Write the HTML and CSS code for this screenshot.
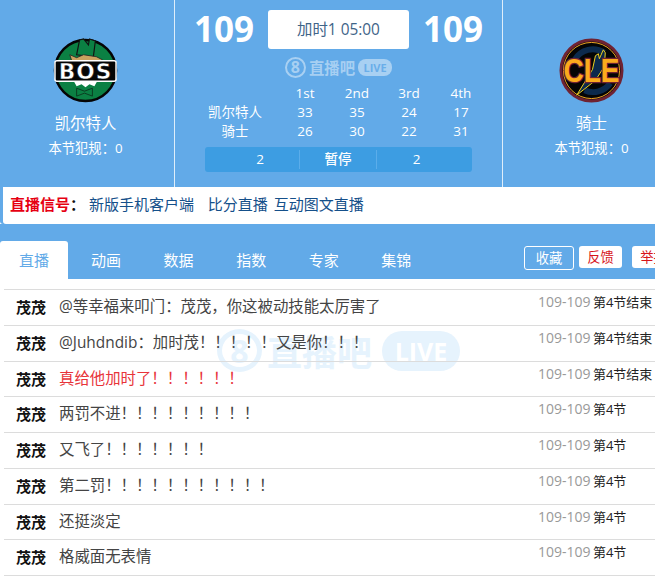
FILE: index.html
```html
<!DOCTYPE html>
<html lang="zh-CN">
<head>
  <title>凯尔特人 vs 骑士 直播</title>
  <meta charset="UTF-8">
  <link rel="stylesheet" href="styles.css">
</head>
<body>
  <div class="page">
    <header class="score-head">
      <div class="team">
        <svg class="logo" viewBox="0 0 66 66">
          <circle cx="33" cy="33" r="31" fill="#0b8043" stroke="#050505" stroke-width="2.5"/>
          <path d="M27 2l-3 15 17 2 2-16-6-2-1 6-5-6z" fill="#0b8043" stroke="#111" stroke-width="1.2"/>
          <path d="M17 17l7 3 7-3 13 2 6 3-4 4H20z" fill="#c9a25f" stroke="#222" stroke-width=".8"/>
          <path d="M20 42l4 7 5-2 4 3 4-3 5 2 4-7z" fill="#fff"/>
          <path d="M24 51l8 3 8-3v8l-8-3-8 3z" fill="#0b8043" stroke="#0a3d22" stroke-width="1"/>
          <rect x="2" y="23" width="62" height="21" rx="2" fill="#050505" stroke="#fff" stroke-width="1.5"/>
          <text class="logo-text bos" x="33" y="41.5" text-anchor="middle">BOS</text>
        </svg>
        <div class="team-name">凯尔特人</div>
        <div class="fouls">本节犯规：0</div>
      </div>

      <div class="center">
        <div class="score-row">
          <span class="score">109</span>
          <span class="clock">加时1 05:00</span>
          <span class="score">109</span>
        </div>
        <div class="mark mark-small">
          <span class="mark-eight">8</span>
          <span class="mark-name">直播吧</span>
          <span class="mark-live">LIVE</span>
        </div>
        <table class="quarters">
          <tr><th></th><td>1st</td><td>2nd</td><td>3rd</td><td>4th</td></tr>
          <tr><th>凯尔特人</th><td>33</td><td>35</td><td>24</td><td>17</td></tr>
          <tr><th>骑士</th><td>26</td><td>30</td><td>22</td><td>31</td></tr>
        </table>
        <div class="timeouts">
          <span class="timeouts-home">2</span>
          <span class="timeouts-label">暂停</span>
          <span class="timeouts-away">2</span>
        </div>
      </div>

      <div class="team">
        <svg class="logo" viewBox="0 0 66 66">
          <circle cx="33" cy="33" r="31" fill="#050505" stroke="#6f2333" stroke-width="3"/>
          <circle cx="33" cy="33" r="28.5" fill="none" stroke="#f5a623" stroke-width="1"/>
          <path d="M16 22a21 21 0 0 1 30-7M52 46a21 21 0 0 1-26 7" fill="none" stroke="#0c2a4d" stroke-width="6"/>
          <path d="M18 58L34 32l3-14 3-2 1 5 4-9 2 3-1 14-9 14z" fill="#0c2a4d" stroke="#f2d21f" stroke-width="1"/>
          <text class="logo-text cle" x="33" y="45" text-anchor="middle" textLength="57" lengthAdjust="spacingAndGlyphs">CLE</text>
        </svg>
        <div class="team-name">骑士</div>
        <div class="fouls">本节犯规：0</div>
      </div>
    </header>

    <div class="signal">
      <b class="signal-label">直播信号</b><b class="signal-colon">：</b>
      <a class="signal-link first">新版手机客户端</a>
      <a class="signal-link wide">比分直播</a>
      <a class="signal-link">互动图文直播</a>
    </div>

    <nav class="tabs">
      <a class="tab active">直播</a>
      <a class="tab">动画</a>
      <a class="tab">数据</a>
      <a class="tab">指数</a>
      <a class="tab">专家</a>
      <a class="tab">集锦</a>
      <div class="tab-actions">
        <a class="action outline">收藏</a>
        <a class="action">反馈</a>
        <a class="action report">举报</a>
      </div>
    </nav>

    <div class="feed">
      <div class="mark mark-big">
        <span class="mark-eight">8</span>
        <span class="mark-name">直播吧</span>
        <span class="mark-live">LIVE</span>
      </div>
      <ul class="rows">
        <li><b>茂茂</b><span class="msg">@等幸福来叩门：茂茂，你这被动技能太厉害了</span><span class="stat"><i>109-109</i> 第4节结束</span></li>
        <li><b>茂茂</b><span class="msg">@Juhdndib：加时茂！！！！！又是你！！！</span><span class="stat"><i>109-109</i> 第4节结束</span></li>
        <li><b>茂茂</b><span class="msg red">真给他加时了！！！！！！</span><span class="stat"><i>109-109</i> 第4节结束</span></li>
        <li><b>茂茂</b><span class="msg">两罚不进！！！！！！！！！</span><span class="stat"><i>109-109</i> 第4节</span></li>
        <li><b>茂茂</b><span class="msg">又飞了！！！！！！！</span><span class="stat"><i>109-109</i> 第4节</span></li>
        <li><b>茂茂</b><span class="msg">第二罚！！！！！！！！！！！</span><span class="stat"><i>109-109</i> 第4节</span></li>
        <li><b>茂茂</b><span class="msg">还挺淡定</span><span class="stat"><i>109-109</i> 第4节</span></li>
        <li><b>茂茂</b><span class="msg">格威面无表情</span><span class="stat"><i>109-109</i> 第4节</span></li>
      </ul>
    </div>
  </div>
</body>
</html>
```

FILE: styles.css
```css
:root {
  --blue: #62aae8;
  --dark-blue: #3d9de2;
  --line: #dcdcdc;
}

html, body {
  margin: 0;
  padding: 0;
  height: 576px;
  overflow: hidden;
  background: #fff;
}

body {
  font-family: "Open Sans", "Noto Sans CJK SC", sans-serif;
  font-size: 14px;
  color: #333;
}

/* the page is wider than the window, the right edge gets cut off */
.page {
  width: 680px;
  overflow: hidden;
}

/* score header */
.score-head {
  display: flex;
  height: 187px;
  background: var(--blue);
  color: #fff;
}

.team {
  width: 174px;
  display: flex;
  flex-direction: column;
  align-items: center;
  padding: 38px 3px 0 0;
  box-sizing: border-box;
}

.team:last-child {
  width: 177px;
  padding-right: 0;
}

.logo {
  display: block;
  width: 65px;
  height: 65px;
  margin-bottom: 1px;
}

.logo-text {
  font-weight: bold;
}

.bos {
  font-family: "DejaVu Sans", sans-serif;
  font-size: 22px;
  fill: #fff;
  stroke: #050505;
  stroke-width: .5;
  letter-spacing: 1px;
}

.cle {
  font-family: "Liberation Sans", sans-serif;
  font-size: 33px;
  fill: #fbab1c;
  stroke: #6f2333;
  stroke-width: 2.5;
  paint-order: stroke;
}

.team-name {
  margin-top: 9px;
  font-size: 15.4px;
  line-height: 22px;
}

.fouls {
  margin-top: 3px;
  font-size: 13.3px;
  line-height: 20px;
}

.center {
  width: 329px;
  flex: none;
  box-sizing: border-box;
  border-left: 1px solid #dfeefa;
  border-right: 1px solid #dfeefa;
  padding: 10px 0 0;
  display: flex;
  flex-direction: column;
  align-items: center;
}

.score-row {
  display: flex;
  align-items: center;
  justify-content: center;
  height: 39px;
}

.score {
  width: 88px;
  text-align: center;
  font-weight: 700;
  font-size: 35px;
  line-height: 37px;
  height: 39px;
}

.clock {
  width: 141px;
  height: 39px;
  line-height: 39px;
  background: #fff;
  border-radius: 3px;
  text-align: center;
  color: #3f6488;
  font-size: 15.4px;
}

/* 8 直播吧 LIVE watermark */
.mark {
  display: flex;
  align-items: center;
  font-weight: 700;
}

.mark-small {
  margin-top: 8px;
  height: 20px;
  color: rgba(255, 255, 255, .45);
}

.mark-eight {
  display: block;
  box-sizing: border-box;
  text-align: center;
  border-radius: 50%;
  border: 3px solid;
}

.mark-small .mark-eight {
  width: 21px;
  height: 21px;
  line-height: 17px;
  font-size: 16px;
  border-width: 2px;
}

.mark-small .mark-name {
  margin-left: 3px;
  font-size: 15.4px;
}

.mark-small .mark-live {
  margin-left: 3px;
  width: 34px;
  text-align: center;
  height: 17px;
  line-height: 17px;
  font-size: 11px;
  color: rgba(98, 170, 232, .9);
  background: rgba(255, 255, 255, .45);
  border-radius: 8px;
}

.quarters {
  border-collapse: collapse;
  margin-top: 7px;
  margin-left: 30px;
  align-self: flex-start;
  table-layout: fixed;
  font-size: 13.5px;
}

.quarters th {
  width: 60px;
  font-weight: normal;
  padding: 0 14px 0 0;
}

.quarters td {
  padding: 0;
  text-align: center;
  width: 52px;
}

.quarters tr {
  height: 19px;
  line-height: 19px;
}

.timeouts {
  display: grid;
  grid-template-columns: 94px 78px 95px;
  width: 267px;
  height: 25px;
  margin-top: 6px;
  background: var(--dark-blue);
  border-radius: 3px;
  line-height: 25px;
  text-align: center;
  font-size: 13.5px;
  align-self: flex-start;
  margin-left: 30px;
}

.timeouts-home {
  padding-left: 16px;
}

.timeouts-away {
  padding-right: 16px;
}

.timeouts-label {
  border-left: 1px solid #5badea;
  border-right: 1px solid #5badea;
  height: 19px;
  line-height: 19px;
  margin-top: 3px;
  font-weight: 500;
}

/* signal links */
.signal {
  margin-left: 3px;
  height: 37px;
  line-height: 35px;
  padding-left: 7px;
  background: #fff;
  border-bottom-left-radius: 3px;
  box-sizing: border-box;
  font-size: 15px;
  white-space: nowrap;
  box-shadow: -3px 0 0 var(--blue);
}

.signal-label {
  color: #e60012;
}

.signal-colon {
  color: #111;
}

.signal-link {
  color: #15508a;
  margin-left: 2px;
}

.signal-link.first {
  margin-left: 0;
}

.signal-link.wide {
  margin-left: 10px;
}

/* tabs */
.tabs {
  display: flex;
  align-items: flex-end;
  height: 55px;
  background: var(--blue);
  position: relative;
}

.tab {
  width: 72.6px;
  height: 38px;
  line-height: 38px;
  text-align: center;
  color: #fff;
  font-size: 15px;
  flex: none;
}

.tab.active {
  width: 68px;
  margin-right: 1.7px;
  background: #fff;
  color: #62aae8;
  border-top-right-radius: 3px;
  border-top-left-radius: 3px;
}

.tab-actions {
  position: absolute;
  left: 524px;
  top: 22px;
  display: flex;
  gap: 5px;
}

.action {
  flex: none;
  width: 43px;
  height: 22px;
  line-height: 22px;
  text-align: center;
  background: #fff;
  color: #d7141a;
  font-size: 13.3px;
  border-radius: 3px;
}

.action.outline {
  width: 48px;
  background: transparent;
  border: 1px solid #fff;
  color: #fff;
}

.action.report {
  margin-left: 5px;
}

/* live feed */
.feed {
  position: relative;
  padding: 10px 0 0 4px;
}

.mark-big {
  position: absolute;
  left: 217px;
  top: 46px;
  color: #e6f3fd;
}

.mark-big .mark-eight {
  width: 45px;
  height: 43px;
  line-height: 33px;
  font-size: 32px;
  border-width: 5px;
}

.mark-big .mark-name {
  margin-left: 5px;
  font-size: 35px;
}

.mark-big .mark-live {
  margin-left: 10px;
  width: 78px;
  text-align: center;
  height: 40px;
  line-height: 40px;
  font-size: 25px;
  color: #fff;
  background: #e6f3fd;
  border-radius: 20px;
}

.rows {
  list-style: none;
  margin: 0;
  padding: 0;
  position: relative;
  border-top: 1px solid var(--line);
}

.rows li {
  display: flex;
  height: 35.75px;
  box-sizing: border-box;
  border-bottom: 1px solid var(--line);
  line-height: 34px;
  white-space: nowrap;
}

.rows b {
  width: 55px;
  padding-left: 12px;
  box-sizing: border-box;
  color: #111;
  flex: none;
  font-size: 15px;
}

.msg {
  width: 479px;
  flex: none;
  color: #444;
  font-size: 15.4px;
}

.msg.red {
  color: #e8343a;
}

.stat {
  font-size: 13px;
  line-height: 23px;
  color: #222;
  word-spacing: -1px;
}

.stat i {
  font-style: normal;
  font-size: 14px;
  color: #999;
}
```
